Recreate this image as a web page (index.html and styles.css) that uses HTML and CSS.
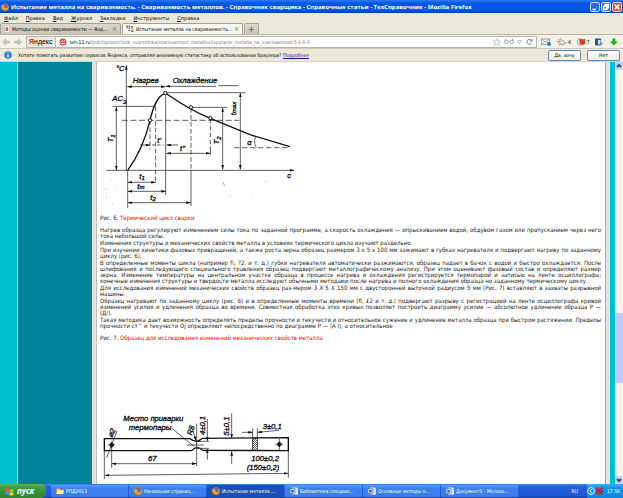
FILE: index.html
```html
<!DOCTYPE html>
<html lang="ru">

<head>
    <meta charset="UTF-8">
    <meta name="viewport" content="width=device-width, initial-scale=1.0">
    <title>Испытание металла на свариваемость</title>
    <link rel="stylesheet" href="styles.css">
</head>

<body>
    <svg class="defs" width="0" height="0" aria-hidden="true">
        <symbol id="firefox" viewBox="0 0 16 16">
            <circle cx="8" cy="8" r="7.5" fill="#e66a10"/>
            <circle cx="8.500" cy="6.500" r="5" fill="#3c78c8"/>
            <path d="M1 4c2-1 3 0 4 1l3 1-1 2c0 3 4 3 6 1 1-2 1-4 0-6 3 3 3 8 0 11-3 2-8 2-10-1C0 10 0 7 1 4z" fill="#f79a1c"/>
        </symbol>
        <symbol id="word" viewBox="0 0 16 16">
            <path d="M5 1h9l2 3v11H5z" fill="#fff" stroke="#8aa8e0"/>
            <path d="M9 5h5M9 8h5M9 11h5" stroke="#7a94c8"/>
            <rect x="0" y="3" width="10" height="10" fill="#dfe9fb" stroke="#3a62b0"/>
            <path d="M2 5l2 6 1-5 1 5 2-6" fill="none" stroke="#24509c" stroke-width="1.500"/>
        </symbol>
        <symbol id="info" viewBox="0 0 16 16">
            <circle cx="8" cy="8" r="7.500" fill="#2f7fe0"/>
            <path d="M8 7v6M8 3v2" stroke="#fff" stroke-width="2.500"/>
        </symbol>
        <symbol id="arrow" viewBox="0 0 16 16">
            <path d="M1 8l6-6v4h8v4H7v4z" fill="#c9c7ba" stroke="#aaa89b"/>
        </symbol>
        <marker id="tip" viewBox="0 0 14 8" refX="13" refY="4" markerWidth="14" markerHeight="8" markerUnits="userSpaceOnUse" orient="auto-start-reverse">
            <path d="M0 0l14 4-14 4z" fill="#111"/>
        </marker>
    </svg>

    <div class="window">
        <header class="title-bar">
            <svg class="icon"><use href="#firefox"/></svg>
            <h1>Испытание металла на свариваемость. - Свариваемость металлов. - Справочник сварщика - Справочные статьи - ТехСправочник - Mozilla Firefox</h1>
            <div class="window-buttons">
                <button aria-label="Свернуть"><svg viewBox="0 0 10 10"><path d="M2 8h4"/></svg></button>
                <button aria-label="Восстановить"><svg viewBox="0 0 10 10"><path d="M4 4V2h4v4H6M2 4h4v4H2z"/></svg></button>
                <button class="close" aria-label="Закрыть"><svg viewBox="0 0 10 10"><path d="M2 2l6 6M8 2L2 8"/></svg></button>
            </div>
        </header>

        <nav class="menu-bar">
            <button><u>Ф</u>айл</button>
            <button><u>П</u>равка</button>
            <button><u>В</u>ид</button>
            <button><u>Ж</u>урнал</button>
            <button><u>З</u>акладки</button>
            <button><u>И</u>нструменты</button>
            <button><u>С</u>правка</button>
        </nav>

        <div class="tabs">
            <button class="tab"><span class="ya">Я</span><span class="label">Методы оценки свариваемости — Янд...</span><span class="x">×</span></button>
            <button class="tab current"><svg class="icon" viewBox="0 0 16 16"><path d="M0 2h4M2 2v5M5 2h3M5 4h3M5 7h3M10 2l4 5M14 2l-4 5M4 11h5M10 10h5M10 13h5" stroke="#444" stroke-width="1.500"/></svg><span class="label">Испытание металла на свариваемость...</span><span class="x">×</span></button>
            <button class="tab new-tab" aria-label="Новая вкладка">+</button>
        </div>

        <div class="nav-bar">
            <button class="history" aria-label="Назад"><svg class="icon"><use href="#arrow"/></svg></button>
            <button class="history forward" aria-label="Вперед"><svg class="icon"><use href="#arrow"/></svg></button>
            <div class="address">
                <button class="yandex"><b>Я</b>ндекс</button>
                <svg class="icon" viewBox="0 0 16 16"><circle cx="8" cy="8" r="7" fill="#e04438"/><path d="M3 9l4-4 2 2 3-2M4 11h8" stroke="#fff" stroke-width="2" fill="none"/></svg>
                <label class="url"><span>teh-11.ru</span><input type="text" aria-label="Адрес" value="/publ/spravochnik_svarshhika/svarivaemost_metallov/ispytanie_metalla_na_svarivaemost/3-1-0-3"></label>
                <svg class="icon" viewBox="0 0 16 16"><path d="M8 1l2 5 6 .5-5 3.500 2 5-5-3-5 3 2-5-5-3.500L6 6z" fill="#fff" stroke="#999"/></svg>
                <svg class="glasses" viewBox="0 0 20 14"><path d="M8 7c1-2 3-2 4 0M1 5l3-3M19 5l-3-3" fill="none" stroke="#9aa4b8" stroke-width="2"/><circle cx="4.500" cy="8" r="3.500" fill="none" stroke="#9aa4b8" stroke-width="2"/><circle cx="15.500" cy="8" r="3.500" fill="none" stroke="#9aa4b8" stroke-width="2"/></svg>
                <svg class="icon small" viewBox="0 0 16 16"><path d="M2 4h12l-6 9z" fill="none" stroke="#999" stroke-width="2"/></svg>
                <svg class="icon" viewBox="0 0 16 16"><path d="M12 4a5 5 0 1 0 1 6" fill="none" stroke="#77859c" stroke-width="2"/><path d="M9 7h6V1z" fill="#77859c"/></svg>
            </div>
            <div class="extras">
                <svg class="extra" viewBox="0 0 20 16"><path d="M1 2h16v11H1zM1 2l8 7 8-7M1 13l6-6M17 13l-6-6" fill="#fff" stroke="#556"/><circle cx="16" cy="12" r="4" fill="#2388a8"/></svg>
                <span class="weather"><svg class="extra" viewBox="0 0 20 16"><path d="M1 7h5M4 2l4 3M9 1v3M6 12c-3-4 1-6 3-5 2-4 7-3 7 1 4 0 4 4 1 4z" fill="#eee" stroke="#555"/><path d="M7 15l2-3M12 15l2-3" stroke="#555"/></svg>-6</span>
                <span class="weather"><svg class="extra" viewBox="0 0 20 16"><circle cx="9" cy="8" r="7" fill="#ddd" stroke="#888"/><path d="M7 1l6 2 5-1v10l-6 2-5-3z" fill="#d8402c"/></svg>7</span>
                <svg class="extra" viewBox="0 0 20 16"><path d="M2 1h12v14H2z" fill="#245c94"/><path d="M8 4h5v9H8z" fill="#dceaf6"/><circle cx="14" cy="11" r="3" fill="#5f95c4"/></svg>
                <svg class="extra" viewBox="0 0 20 16"><path d="M7 1h6v6h5l-8 8-8-8h5z" fill="#1fb41f"/></svg>
            </div>
        </div>

        <div class="info-bar">
            <svg class="icon"><use href="#info"/></svg>
            <p>Хотите помогать развитию сервисов Яндекса, отправляя анонимную статистику об использовании браузера? <a href="#">Подробнее</a></p>
            <button>Да, хочу</button>
            <button>Нет</button>
        </div>

        <div class="page">
            <div class="side"></div>
            <main>
                <svg class="figure" viewBox="30 6 600 450" role="img" aria-label="Термический цикл сварки">
                    <g class="thin">
                        <path d="M109 332V16" marker-end="url(#tip)"/>
                        <path d="M50 331H612" marker-end="url(#tip)"/>
                        <path d="M112 80H226" marker-start="url(#tip)" marker-end="url(#tip)"/>
                        <path d="M228 79H378M385 77H446" marker-start="url(#tip)"/>
                        <path d="M228 98H466M68 139H198M303 142H412"/>
                        <path d="M95 181H448" stroke-dasharray="18 8"/>
                        <path d="M79 141V330" marker-start="url(#tip)" marker-end="url(#tip)"/>
                        <path d="M398 144V328" marker-start="url(#tip)" marker-end="url(#tip)"/>
                        <path d="M451 99V328" marker-start="url(#tip)" marker-end="url(#tip)"/>
                        <path d="M227 100V405M113 332V444M303 330V438M361 260V285"/>
                        <path d="M180 181V268M197 140V370M303 144V330M361 176V262" stroke-dasharray="14 7"/>
                        <path d="M150 255H180" marker-end="url(#tip)"/>
                        <path d="M186 255H222" stroke-dasharray="10 6"/>
                        <path d="M264 255H230" marker-end="url(#tip)"/>
                        <path d="M230 280H360" marker-start="url(#tip)" marker-end="url(#tip)"/>
                        <path d="M114 367H197" marker-start="url(#tip)" marker-end="url(#tip)"/>
                        <path d="M114 394H227" marker-start="url(#tip)" marker-end="url(#tip)"/>
                        <path d="M114 428H302" marker-start="url(#tip)" marker-end="url(#tip)"/>
                        <path d="M432 263H600" stroke-dasharray="16 8"/>
                        <path d="M498 228c-6 12-5 24 1 34"/>
                    </g>
                    <path class="thick" d="M113 331C143 290 167 236 180 181C190 139 202 108 226 99C284 139 330 163 361 175L480 224L600 260"/>
                    <g class="points">
                        <circle cx="180" cy="181" r="5"/>
                        <circle cx="226" cy="99" r="5"/>
                        <circle cx="303" cy="142" r="5"/>
                        <circle cx="361" cy="174" r="5"/>
                    </g>
                    <g class="drawing-text">
                        <text x="78" y="32">°C</text>
                        <text x="128" y="70">Нагрев</text>
                        <text x="248" y="69">Охлаждение</text>
                        <text x="67" y="124">AC<tspan class="sub" dy="7">3</tspan></text>
                        <text x="202" y="248">t'</text>
                        <text x="270" y="273">t"</text>
                        <text x="148" y="357">t<tspan class="sub" dy="3">1</tspan></text>
                        <text x="142" y="387">t<tspan class="sub">m</tspan></text>
                        <text x="181" y="419">t<tspan class="sub" dy="5">2</tspan></text>
                        <text x="472" y="255">α</text>
                        <text x="592" y="354">c</text>
                        <text transform="translate(70 247) rotate(-90)">T<tspan class="sub" dy="5">1</tspan></text>
                        <text transform="translate(388 253) rotate(-90)">T<tspan class="sub" dy="5">2</tspan></text>
                        <text transform="translate(437 166) rotate(-90)">t<tspan class="sub">max</tspan></text>
                    </g>
                    <path class="specks" d="M45 388l3-2M59 362h2M75 385h2M48 412h3M398 366l6 12M420 409h3M525 365h3M482 403h2M65 432h3M36 128h2"/>
                </svg>

                <p class="caption">Рис. 6. <span>Термический цикл сварки</span></p>

                <article>
                    <p><span class="line">Нагрев образца регулируют изменением силы тока по заданной программе, а скорость охлаждения — опрыскиванием водой, обдувом газом или пропусканием через него</span> тока небольшой силы.</p>
                    <p>Изменения структуры и механических свойств металла в условиях термического цикла изучают раздельно.</p>
                    <p><span class="line">При изучении кинетики фазовых превращений, а также роста зерна образец размером 3 x 5 x 100 мм зажимают в губках нагревателя и подвергают нагреву по заданному</span> циклу (рис. 6).</p>
                    <p><span class="line">В определенные моменты цикла (например f\, ?2, и т. д.) губки нагревателя автоматически разжимаются, образец падает в бачок с водой и быстро охлаждается. После</span> <span class="line">шлифования и последующего специального травления образец подвергают металлографическому анализу. При этом оценивают фазовый состав и определяют размер</span> <span class="line">зерна. Изменение температуры на центральном участке образца в процессе нагрева и охлаждения регистрируется термопарой и записью на ленте осциллографа;</span> конечные изменения структуры и твердости металла исследуют обычными методами после нагрева и полного охлаждения образца но заданному термическому циклу.</p>
                    <p><span class="line">Для исследования изменений механических свойств образец раз-мером 3 X 5 X 150 мм с двусторонней выточкой радиусом 5 мм (Рис. 7) вставляют в захваты разрывной</span> машины.</p>
                    <p><span class="line">Образец нагревают по заданному циклу (рис. 6) и в определенные моменты времени (fi, £2 и т. д.) подвергают разрыву с регистрацией на ленте осциллографа кривой</span> <span class="line">изменений усилия и удлинения образца во времени. Совместная обработка этих кривых позволяет построить диаграмму усилие — абсолютное удлинение образца Р —</span> (Д/).</p>
                    <p><span class="line">Такая методика дает возможность определять пределы прочности и текучести и относительное сужение и удлинение металла образца при быстром растяжении. Пределы</span> прочности ст^ и текучести Oj определяют непосредственно по диаграмме Р — (А I), а относительное</p>
                </article>

                <p class="caption">Рис. 7. <span>Образец для исследования изменений механических свойств металла</span></p>

                <svg class="figure specimen" viewBox="30 39 600 228" role="img" aria-label="Образец для исследования">
                    <defs>
                        <pattern id="hatch" width="6" height="6" patternUnits="userSpaceOnUse"><path d="M0 6l6-6" stroke="#111" stroke-width="2"/></pattern>
                    </defs>
                    <path class="thick" d="M43 131H301C307 137 312 139 320 139C329 139 332 131 338 130L595 128V167L338 166C332 159 329 158 320 158C312 158 309 167 302 167H43z"/>
                    <rect x="488" y="130" width="14" height="36" fill="url(#hatch)" stroke="#111" stroke-width="2"/>
                    <g class="thin">
                        <path d="M43 167V252M595 167V248M65 140V218M320 86V213"/>
                        <path d="M45 241L594 235" marker-start="url(#tip)" marker-end="url(#tip)"/>
                        <path d="M66 206H319" marker-start="url(#tip)" marker-end="url(#tip)"/>
                        <path d="M81 108L50 188M246 100L314 156M290 150H342M317 139H357M317 160H357"/>
                        <path d="M352 72V138" marker-end="url(#tip)"/>
                        <path d="M425 55V129" marker-end="url(#tip)"/>
                        <path d="M352 194V162" marker-end="url(#tip)"/>
                        <path d="M425 207V169" marker-end="url(#tip)"/>
                        <path d="M456 112H488" marker-end="url(#tip)"/>
                        <path d="M566 106L503 112" marker-end="url(#tip)"/>
                        <path d="M488 100V130M502 100V130M568 132V168M556 148H579M55 149H75"/>
                        <path d="M304 91L318 137" marker-end="url(#tip)"/>
                        <circle cx="65" cy="150" r="6"/>
                        <circle cx="568" cy="148" r="6"/>
                    </g>
                    <path d="M60 150l5-8 5 8-5 8zM563 148l5-8 5 8-5 8z" fill="#111"/>
                    <g class="drawing-text">
                        <text x="100" y="78">Место приварки</text>
                        <text x="116" y="104">термопары</text>
                        <text x="174" y="198">67</text>
                        <text x="518" y="103">3±0,1</text>
                        <text x="484" y="199">100±0,2</text>
                        <text x="470" y="226">(150±0,2)</text>
                        <text transform="translate(66 130) rotate(-66)">⌀2</text>
                        <text transform="translate(305 122) rotate(-72)">R5</text>
                        <text transform="translate(345 120) rotate(-90)">4±0,1</text>
                        <text transform="translate(418 122) rotate(-90)">5±0,1</text>
                    </g>
                </svg>
            </main>
            <div class="edge"></div>
            <div class="scrollbar"><button aria-label="Вверх"><svg viewBox="0 0 8 8"><path d="M2 5l2-2 2 2"/></svg></button><div class="track"><div class="thumb"></div></div><button aria-label="Вниз"><svg viewBox="0 0 8 8"><path d="M2 3l2 2 2-2"/></svg></button></div>
        </div>

        <footer class="taskbar">
            <button class="start"><svg viewBox="0 0 16 16"><path d="M1 3q3-2 6 0v5q-3-2-6 0z" fill="#f05a28"/><path d="M8 3q3 2 7 0v5q-4 2-7 0z" fill="#8cd43c"/><path d="M1 9q3-2 6 0v5q-3-2-6 0z" fill="#4a9cf4"/><path d="M8 9q3 2 7 0v5q-4 2-7 0z" fill="#fbd030"/></svg>пуск</button>
            <div class="tasks">
                <button><svg class="icon" viewBox="0 0 16 16"><path d="M1 3h5l2 2h7v9H1z" fill="#f4d35e" stroke="#b88a20"/><path d="M1 14l2-7h13l-2 7z" fill="#fff0a0"/></svg>РПД2013</button>
                <button><svg class="icon"><use href="#firefox"/></svg>Начальная страниц...</button>
                <button class="active"><svg class="icon"><use href="#firefox"/></svg>Испытание металла ...</button>
                <button><svg class="icon"><use href="#word"/></svg>Библиотека специал...</button>
                <button><svg class="icon"><use href="#word"/></svg>Основные методы о...</button>
                <button><svg class="icon"><use href="#word"/></svg>Документ3 - Microso...</button>
            </div>
            <span class="language">RU</span>
            <div class="tray">
                <svg class="icon" viewBox="0 0 16 16"><circle cx="8" cy="8" r="7" fill="#2c9cf0" stroke="#bfe4ff" stroke-width="2"/><path d="M10 4L6 8l4 4" fill="none" stroke="#fff" stroke-width="2"/></svg>
                <svg class="icon" viewBox="0 0 16 16"><path d="M1 1h4v5l5-5h5L8 8l7 7h-5l-5-5v5H1z" fill="#e81010"/><path d="M10 7l5 2-4 2z" fill="#222"/></svg>
                <span>17:56</span>
            </div>
        </footer>
    </div>
</body>

</html>
```

FILE: styles.css
```css
* {
    box-sizing: border-box;
}

body {
    margin: 0;
    font-family: "DejaVu Sans Condensed", "Noto Sans", sans-serif;
    font-size: 5px;
    line-height: 8px;
    color: #000;
}

button,
input {
    margin: 0;
    padding: 0;
    border: none;
    background: none;
    font: inherit;
    color: inherit;
    white-space: nowrap;
}

p,
h1 {
    margin: 0;
}

.defs {
    position: absolute;
}

.icon {
    width: 8px;
    height: 8px;
    flex: none;
}

.window {
    display: flex;
    flex-direction: column;
    height: 100vh;
    overflow: hidden;
    background-color: #ece9d8;
}

/* title bar */
.title-bar {
    display: flex;
    align-items: center;
    gap: 2px;
    height: 13px;
    flex: none;
    padding: 0 1px;
    background: linear-gradient(#2a7cf4, #0054e3 25%, #0458ec 80%, #003cb4);
    color: #fff;
}

.title-bar h1 {
    flex: 1;
    font-family: "Open Sans", sans-serif;
    font-size: 6px;
    font-weight: bold;
    white-space: nowrap;
    overflow: hidden;
}

.window-buttons {
    display: flex;
    gap: 1px;
}

.window-buttons button {
    width: 10px;
    height: 10px;
    border: 1px solid #c4d8fa;
    border-radius: 2px;
    background-color: #2f6ae0;
}

.window-buttons .close {
    background-color: #dd4a22;
}

.window-buttons svg {
    display: block;
    fill: none;
    stroke: #fff;
    stroke-width: 2;
}

/* menu */
.menu-bar {
    display: flex;
    gap: 8px;
    height: 10px;
    flex: none;
    padding: 0 4px;
    font-family: "DejaVu Sans", sans-serif;
}

/* tabs */
.tabs {
    display: flex;
    gap: 1px;
    height: 12px;
    flex: none;
    border-bottom: 1px solid #b8b5a6;
}

.tab {
    display: flex;
    align-items: center;
    gap: 2px;
    flex: none;
    width: 121px;
    padding: 0 3px;
    border: 1px solid #a3a193;
    border-bottom: none;
    border-radius: 2px 2px 0 0;
    background: linear-gradient(#dcd9cb, #c8c5b6);
    text-align: left;
}

.tab.current {
    background: #f8f7f1;
}

.tab .label {
    flex: 1;
    min-width: 0;
}

.tab .x {
    font-size: 7px;
    color: #777;
}

.tab.new-tab {
    width: 15px;
    justify-content: center;
    font-size: 9px;
    font-weight: bold;
    color: #5f7482;
}

.ya {
    width: 6px;
    border: 1px solid #d0c8c0;
    background-color: #fff;
    color: #e02020;
    font-weight: bold;
    line-height: 6px;
}

/* address */
.nav-bar {
    display: flex;
    align-items: center;
    height: 13px;
    flex: none;
    padding-left: 2px;
    background-color: #f4f2e8;
}

.history {
    width: 12px;
    height: 8px;
    text-align: left;
}

.history svg,
.extra {
    display: block;
}

.forward svg {
    transform: scaleX(-1);
}

.address {
    display: flex;
    align-items: center;
    gap: 3px;
    flex: 1;
    height: 12px;
    padding-right: 3px;
    border: 1px solid #b5b3a6;
    background-color: #fff;
}

.yandex {
    height: 10px;
    padding: 0 2px;
    border-right: 1px solid #c5c2b4;
    background-color: #ebe8dc;
    font-family: "Liberation Sans", Arial, sans-serif;
    font-size: 7px;
}

.yandex b {
    color: #e01818;
}

.url {
    display: flex;
    flex: 1;
}

.url input {
    flex: 1;
    min-width: 0;
    height: 8px;
    color: #7c7c7c;
}

.small {
    width: 5px;
}

.glasses {
    width: 10px;
    height: 7px;
}

.extras {
    display: flex;
    align-items: center;
    justify-content: space-between;
    width: 86px;
    padding: 0 4px;
}

.extra {
    width: 10px;
    height: 8px;
}

.weather {
    display: flex;
    gap: 1px;
}

/* message */
.info-bar {
    display: flex;
    align-items: center;
    gap: 6px;
    height: 14px;
    flex: none;
    padding: 0 3px 0 4px;
    border-top: 1px solid #cfccbd;
    border-bottom: 1px solid #d5d2c4;
}

.info-bar p {
    flex: 1;
    white-space: nowrap;
}

.info-bar a {
    color: #1a1a9c;
}

.info-bar button {
    width: 33px;
    height: 11px;
    border: 1px solid #6a86a8;
    border-radius: 2px;
    background: linear-gradient(#fff, #eeede4);
}

/* page */
.page {
    display: flex;
    flex: 1;
    min-height: 0;
    background-color: #00bfcf;
}

.side {
    width: 80px;
    margin-left: 17px;
    border-left: 1px solid #7fd4dc;
    border-right: 1px solid #bbb;
    background: linear-gradient(to right, #008299 74px, #e4e4e4 74px);
    flex: none;
}

main {
    flex: 1;
    min-width: 0;
    padding: 0 4px 0 3px;
    background-color: #fff;
    font-size: 6px;
    line-height: 6px;
    color: #222;
    overflow: hidden;
}

.edge {
    width: 5px;
    border-left: 1px solid #aaa;
    background-color: #e4e4e4;
    flex: none;
}

.figure {
    display: block;
    width: 200px;
    height: 150px;
    fill: none;
    stroke: #111;
}

.specimen {
    height: 76px;
    margin-top: 67px;
}

.thin {
    stroke-width: 2;
}

.thick {
    stroke-width: 4;
}

.points {
    fill: #fff;
    stroke-width: 3;
}

.specks {
    stroke: #888;
    stroke-width: 2;
}

.drawing-text {
    fill: #111;
    stroke: #111;
    stroke-width: 1;
    font-family: "Liberation Sans", Arial, sans-serif;
    font-size: 23px;
    font-style: italic;
}

.sub {
    font-size: 18px;
}

.caption {
    margin-top: 3px;
}

.caption span {
    color: #f00;
}

article {
    margin: 6px 0;
    display: flex;
    flex-direction: column;
    gap: 1px;
}

.line {
    display: block;
    text-align: justify;
    text-align-last: justify;
    white-space: nowrap;
}

.scrollbar {
    display: flex;
    flex-direction: column;
    width: 8px;
    margin-left: 5px;
    flex: none;
    background-color: #f6f5ef;
}

.scrollbar button {
    height: 8px;
    border-radius: 1px;
    background-color: #c6d4fb;
}

.scrollbar svg {
    display: block;
    width: 8px;
    height: 8px;
    fill: none;
    stroke: #344c80;
    stroke-width: 2;
}

.track {
    display: flex;
    flex-direction: column;
    flex: 1;
    padding-top: 243px;
}

.thumb {
    height: 70px;
    border-radius: 1px;
    background-color: #bccbfa;
}

/* taskbar */
.taskbar {
    display: flex;
    align-items: center;
    height: 14px;
    flex: none;
    background: linear-gradient(#3f86f0, #245edb 20%, #2258d4 85%, #1941a5);
    color: #fff;
}

.start {
    display: flex;
    align-items: center;
    gap: 3px;
    width: 46px;
    height: 14px;
    padding-left: 5px;
    border-radius: 0 5px 5px 0;
    background: linear-gradient(#5bb05b, #3c9a3c 30%, #2f852f);
    font-family: "Open Sans", sans-serif;
    font-size: 8px;
    font-style: italic;
    font-weight: bold;
}

.start svg {
    width: 9px;
    height: 9px;
}

.tasks {
    display: flex;
    gap: 1px;
    flex: 1;
    padding: 0 5px;
}

.tasks button {
    display: flex;
    align-items: center;
    gap: 2px;
    flex: 0 1 77px;
    height: 12px;
    padding-left: 5px;
    border-radius: 1px;
    background: linear-gradient(#5a9bfa, #3c80f0 30%, #3a7cea);
    overflow: hidden;
}

.tasks .active {
    background: #1c4fb8;
}

.language {
    padding-right: 9px;
}

.tray {
    display: flex;
    align-items: center;
    gap: 1px;
    width: 36px;
    height: 14px;
    background: linear-gradient(#3cb4f4, #1290e8 30%, #1188e0);
}

.tray span {
    padding-left: 2px;
}
```
